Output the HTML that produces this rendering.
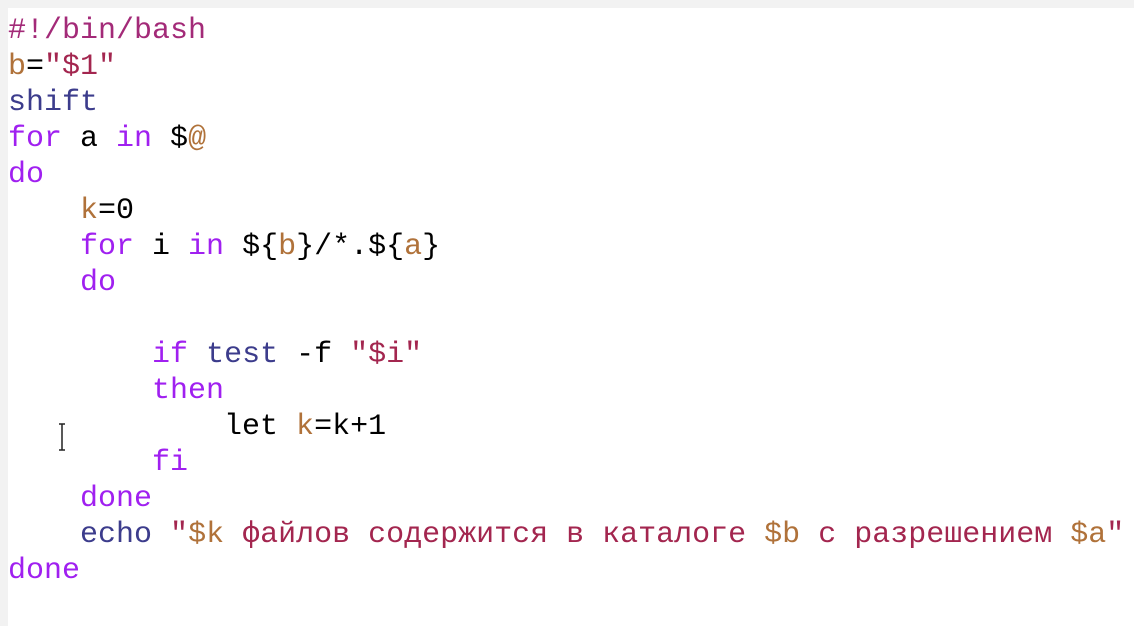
<!DOCTYPE html><html><head><meta charset="utf-8"><style>
body{margin:0;width:1134px;height:626px;background:#f2f2f2;overflow:hidden}
.ed{position:absolute;left:8px;top:8px;right:0;bottom:0;background:#fff}
pre{margin:0;position:absolute;left:8px;top:13px;font:30px/36px "Liberation Mono","Noto Sans CJK SC",monospace;color:#000;letter-spacing:0}
.k{color:#a020f0}.c{color:#3c3c8c}.v{color:#b0723a}.s{color:#a3264f}.h{color:#a32a78}
.cur{position:absolute;left:57px;top:423px;width:10px;height:28px}
</style></head><body><div class="ed"></div>
<pre><span class="h">#!/bin/bash</span>
<span class="v">b</span>=<span class="s">"$1"</span>
<span class="c">shift</span>
<span class="k">for</span> a <span class="k">in</span> $<span class="v">@</span>
<span class="k">do</span>
    <span class="v">k</span>=0
    <span class="k">for</span> i <span class="k">in</span> ${<span class="v">b</span>}/*.${<span class="v">a</span>}
    <span class="k">do</span>

        <span class="k">if</span> <span class="c">test</span> -f <span class="s">"$i"</span>
        <span class="k">then</span>
            let <span class="v">k</span>=k+1
        <span class="k">fi</span>
    <span class="k">done</span>
    <span class="c">echo</span> <span class="s">"<span class="v">$k</span> файлов содержится в каталоге <span class="v">$b</span> с разрешением <span class="v">$a</span>"</span>
<span class="k">done</span></pre>
<svg class="cur" viewBox="0 0 10 28"><path d="M2 1h6M5 1v26M2 27h6" stroke="#222" stroke-width="1.5" fill="none"/></svg>
</body></html>
